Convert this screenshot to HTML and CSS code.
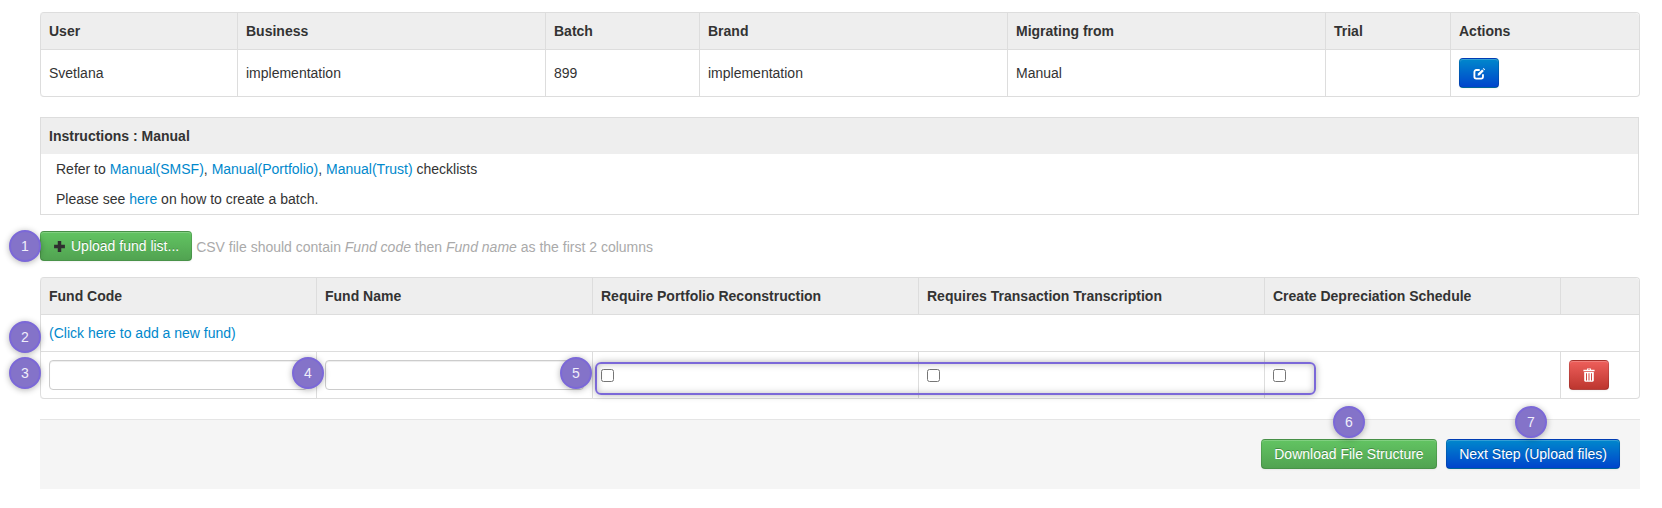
FILE: index.html
```html
<!DOCTYPE html>
<html lang="en">
<head>
<meta charset="utf-8">
<title>Create batch</title>
<link rel="stylesheet" href="styles.css">
</head>
<body>
<main class="page">
  <table class="grid summary">
    <colgroup>
      <col class="s1"><col class="s2"><col class="s3"><col class="s4"><col class="s5"><col class="s6"><col class="s7">
    </colgroup>
    <thead>
      <tr><th>User</th><th>Business</th><th>Batch</th><th>Brand</th><th>Migrating from</th><th>Trial</th><th>Actions</th></tr>
    </thead>
    <tbody>
      <tr>
        <td>Svetlana</td><td>implementation</td><td>899</td><td>implementation</td><td>Manual</td><td></td>
        <td><button class="btn btn-blue btn-icon" type="button" aria-label="Edit">
          <svg class="icon" viewBox="0 0 12 12" width="13" height="13"><path d="M9.2 6.6V9a1.7 1.7 0 0 1-1.7 1.7H3A1.7 1.7 0 0 1 1.3 9V4.5A1.7 1.7 0 0 1 3 2.8h3.2" fill="none" stroke="#fff" stroke-width="1.7"/><path d="M4.2 8L4.6 6 8.4 2.2 10 3.8 6.2 7.6z" fill="#fff"/><path d="M9.1 1.5l.6-.6 1.5 1.5-.6.6z" fill="#fff"/></svg>
        </button></td>
      </tr>
    </tbody>
  </table>

  <section class="panel">
    <h2 class="panel-title">Instructions : Manual</h2>
    <div class="panel-body">
      <p>Refer to <a href="#">Manual(SMSF)</a>, <a href="#">Manual(Portfolio)</a>, <a href="#">Manual(Trust)</a> checklists</p>
      <p>Please see <a href="#">here</a> on how to create a batch.</p>
    </div>
  </section>

  <div class="upload-row">
    <button class="btn btn-green" type="button">
      <svg class="icon plus" viewBox="0 0 12 12" width="13" height="13"><path d="M4.4 1h3.2v3.4H11v3.2H7.6V11H4.4V7.6H1V4.4h3.4z" fill="#2f2f2f"/></svg>Upload fund list...
    </button>
    <span class="hint">CSV file should contain <em>Fund code</em> then <em>Fund name</em> as the first 2 columns</span>
  </div>

  <table class="grid funds">
    <colgroup>
      <col class="f1"><col class="f2"><col class="f3"><col class="f4"><col class="f5"><col class="f6">
    </colgroup>
    <thead>
      <tr><th>Fund Code</th><th>Fund Name</th><th>Require Portfolio Reconstruction</th><th>Requires Transaction Transcription</th><th>Create Depreciation Schedule</th><th></th></tr>
    </thead>
    <tbody>
      <tr><td colspan="6"><a href="#">(Click here to add a new fund)</a></td></tr>
      <tr>
        <td><input class="field" type="text" aria-label="Fund code"></td>
        <td><input class="field" type="text" aria-label="Fund name"></td>
        <td><input class="check" type="checkbox" aria-label="Require portfolio reconstruction"></td>
        <td><input class="check" type="checkbox" aria-label="Requires transaction transcription"></td>
        <td><input class="check" type="checkbox" aria-label="Create depreciation schedule"></td>
        <td><button class="btn btn-red btn-icon" type="button" aria-label="Delete">
          <svg class="icon" viewBox="0 0 12 14" width="12" height="14"><path d="M4 1.8V.6h4v1.2h3.6v1.4H.4V1.8zM5 1.8h2V1.3H5z" fill="#fff" fill-rule="evenodd"/><path d="M1.2 4h9.6v8.6c0 .7-.5 1.2-1.2 1.2H2.4c-.7 0-1.2-.5-1.2-1.2zM3 5.2v7.2h1V5.2zm2.5 0v7.2h1V5.2zm2.5 0v7.2h1V5.2z" fill="#fff" fill-rule="evenodd"/></svg>
        </button></td>
      </tr>
    </tbody>
  </table>

  <footer class="actions">
    <button class="btn btn-green btn-download" type="button">Download File Structure</button>
    <button class="btn btn-blue" type="button">Next Step (Upload files)</button>
  </footer>

  <div class="outline"></div>
  <span class="badge b1">1</span>
  <span class="badge b2">2</span>
  <span class="badge b3">3</span>
  <span class="badge b4">4</span>
  <span class="badge b5">5</span>
  <span class="badge b6">6</span>
  <span class="badge b7">7</span>
</main>
</body>
</html>
```
FILE: styles.css
```css
* { box-sizing: border-box; }
html, body { margin: 0; background: #fff; }
body {
  font-family: "Liberation Sans", Arial, sans-serif;
  font-size: 14px;
  line-height: 20px;
  color: #333;
}
a { color: #0088cc; text-decoration: none; }
.page { position: relative; width: 1662px; height: 508px; padding: 12px 22px 0 40px; overflow: hidden; }

.grid {
  width: 1599px;
  table-layout: fixed;
  border-collapse: separate;
  border-spacing: 0;
  border: 1px solid #ddd;
  border-left: 0;
  border-radius: 4px;
}
.grid th, .grid td {
  padding: 8px;
  text-align: left;
  vertical-align: top;
  border-left: 1px solid #ddd;
  border-top: 1px solid #ddd;
}
.grid thead th { border-top: 0; background: #eee; font-weight: bold; }
.grid thead th:first-child { border-top-left-radius: 4px; }
.grid thead th:last-child { border-top-right-radius: 4px; }
.grid tbody tr:last-child td:first-child { border-bottom-left-radius: 4px; }
.s1 { width: 197px; } .s2 { width: 308px; } .s3 { width: 154px; } .s4 { width: 308px; }
.s5 { width: 318px; } .s6 { width: 125px; } .s7 { width: 189px; }
.f1 { width: 276px; } .f2 { width: 276px; } .f3 { width: 326px; } .f4 { width: 346px; }
.f5 { width: 296px; } .f6 { width: 79px; }
.summary td { line-height: 30px; }

.panel { width: 1599px; margin-top: 20px; border: 1px solid #ddd; }
.panel-title { margin: 0; padding: 8px; font-size: 14px; line-height: 20px; font-weight: bold; background: #eee; height: 36px; }
.panel-body { padding: 5px 15px; }
.panel-body p { margin: 0 0 10px; }
.panel-body p:last-child { margin: 0; }

.upload-row { display: flex; align-items: center; gap: 4px; margin: 16px 0; }
.hint { color: #aaa; margin-top: 2px; }

.btn {
  display: inline-flex;
  align-items: center;
  justify-content: center;
  height: 30px;
  padding: 0 12px;
  font: inherit;
  color: #fff;
  text-shadow: 0 -1px 0 rgba(0,0,0,.25);
  border: 1px solid rgba(0,0,0,.12);
  border-bottom-color: rgba(0,0,0,.25);
  border-radius: 4px;
  box-shadow: inset 0 1px 0 rgba(255,255,255,.2), 0 1px 2px rgba(0,0,0,.05);
}
.btn-green { background: linear-gradient(#62c462, #51a351); }
.btn-blue { background: linear-gradient(#0088cc, #0044cc); }
.btn-red { background: linear-gradient(#ee5f5b, #bd362f); }
.btn-icon { width: 40px; padding: 0; vertical-align: top; }
.btn-download { padding: 0 12.5px; }
.icon { display: block; }
.plus { margin-right: 5px; }

.field {
  display: block;
  width: 100%;
  height: 30px;
  border: 1px solid #ccc;
  border-radius: 4px;
  background: #fff;
  box-shadow: inset 0 1px 1px rgba(0,0,0,.075);
}
.check { display: block; margin: 9px 0 0; }

.actions {
  display: flex;
  justify-content: flex-end;
  gap: 9px;
  margin-top: 20px;
  padding: 19px 20px 20px;
  background: #f5f5f5;
  border-top: 1px solid #e5e5e5;
}

.outline {
  position: absolute;
  left: 595px;
  top: 362px;
  width: 721px;
  height: 33px;
  border: 2px solid #7b68d8;
  border-radius: 6px;
  box-shadow: 0 0 7px rgba(0,0,0,.3), inset 0 0 7px rgba(0,0,0,.25);
}
.badge {
  position: absolute;
  display: flex;
  align-items: center;
  justify-content: center;
  width: 32px;
  height: 32px;
  font-size: 14px;
  color: #f0eefa;
  background: #8473c9;
  border: 2px solid #7b68d8;
  border-radius: 50%;
  box-shadow: 0 1px 6px rgba(0,0,0,.3);
}
.b1 { left: 9px; top: 230px; }
.b2 { left: 9px; top: 321px; }
.b3 { left: 9px; top: 357px; }
.b4 { left: 292px; top: 357px; }
.b5 { left: 560px; top: 357px; }
.b6 { left: 1333px; top: 406px; }
.b7 { left: 1515px; top: 406px; }
```
